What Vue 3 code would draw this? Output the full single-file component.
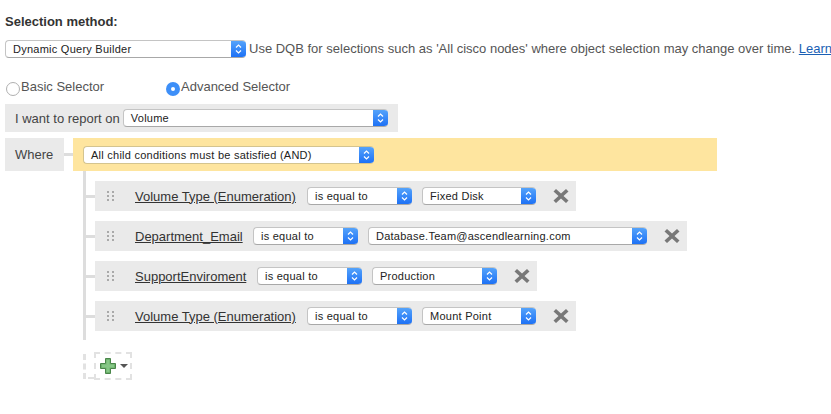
<script setup>
const rows = [
  { label: "Volume Type (Enumeration)", fieldWidth: 162, value: "Fixed Disk", valueWidth: 114 },
  { label: "Department_Email", fieldWidth: 108, value: "Database.Team@ascendlearning.com", valueWidth: 279 },
  { label: "SupportEnviroment", fieldWidth: 112, value: "Production", valueWidth: 125 },
  { label: "Volume Type (Enumeration)", fieldWidth: 162, value: "Mount Point", valueWidth: 114 },
];
</script>

<template>
  <div class="page">
    <div class="title">Selection method:</div>

    <div class="method">
      <div class="sel method-sel">
        <span class="sel-text">Dynamic Query Builder</span>
        <span class="stepper"><svg width="7" height="12" viewBox="0 0 7 12"><path d="M1 4.5 3.5 2 6 4.5M1 7.5 3.5 10 6 7.5" fill="none" stroke="#fff" stroke-width="1.2" /></svg></span>
      </div>
      <span class="help">Use DQB for selections such as 'All cisco nodes' where object selection may change over time. <a class="learn">Learn</a></span>
    </div>

    <div class="radios">
      <label class="radio basic"><span class="dot"></span>Basic Selector</label>
      <label class="radio"><span class="dot on"><span class="pip"></span></span>Advanced Selector</label>
    </div>

    <div class="report">
      <span>I want to report on</span>
      <div class="sel report-sel">
        <span class="sel-text">Volume</span>
        <span class="stepper"><svg width="7" height="12" viewBox="0 0 7 12"><path d="M1 4.5 3.5 2 6 4.5M1 7.5 3.5 10 6 7.5" fill="none" stroke="#fff" stroke-width="1.2" /></svg></span>
      </div>
    </div>

    <div class="where-row">
      <div class="where">Where</div>
      <div class="link"></div>
      <div class="group">
        <div class="sel group-sel">
          <span class="sel-text">All child conditions must be satisfied (AND)</span>
          <span class="stepper"><svg width="7" height="12" viewBox="0 0 7 12"><path d="M1 4.5 3.5 2 6 4.5M1 7.5 3.5 10 6 7.5" fill="none" stroke="#fff" stroke-width="1.2" /></svg></span>
        </div>
      </div>
    </div>

    <div class="tree">
      <div v-for="(row, i) in rows" :key="i" class="cond">
        <svg class="grip" width="7" height="11" viewBox="0 0 7 11" fill="#a9a9a9">
          <rect x="0" y="0" width="2" height="2" /><rect x="5" y="0" width="2" height="2" />
          <rect x="0" y="4" width="2" height="2" /><rect x="5" y="4" width="2" height="2" />
          <rect x="0" y="8" width="2" height="2" /><rect x="5" y="8" width="2" height="2" />
        </svg>
        <a class="field" :style="{ width: row.fieldWidth + 'px' }">{{ row.label }}</a>
        <div class="sel op-sel">
          <span class="sel-text">is equal to</span>
          <span class="stepper"><svg width="7" height="12" viewBox="0 0 7 12"><path d="M1 4.5 3.5 2 6 4.5M1 7.5 3.5 10 6 7.5" fill="none" stroke="#fff" stroke-width="1.2" /></svg></span>
        </div>
        <div class="sel" :style="{ width: row.valueWidth + 'px' }">
          <span class="sel-text">{{ row.value }}</span>
          <span class="stepper"><svg width="7" height="12" viewBox="0 0 7 12"><path d="M1 4.5 3.5 2 6 4.5M1 7.5 3.5 10 6 7.5" fill="none" stroke="#fff" stroke-width="1.2" /></svg></span>
        </div>
        <svg class="remove" width="16" height="16" viewBox="0 0 16 16"><path d="M3 1 8 5.500 13 1 15.500 3.500 10.500 8 15.500 12.500 13 15 8 10.500 3 15 .5 12.500 5.500 8 .5 3.500z" fill="#787878" /></svg>
      </div>
      <div class="add-row">
        <div class="add">
          <svg width="16" height="16" viewBox="0 0 16 16"><path d="M5.500.5h5v5h5v5h-5v5h-5v-5h-5v-5h5z" fill="#6cb06c" stroke="#4a864a" /><path d="M6.500 2h3v4.500H14v3H9.500V14h-3V9.500H2v-3h4.500z" fill="#86c786" /></svg>
          <svg width="8" height="4" viewBox="0 0 8 4"><path d="M0 0h8L4 4z" fill="#555" /></svg>
        </div>
      </div>
    </div>
  </div>
</template>

<style scoped>
.page {
  width: 831px;
  height: 414px;
  overflow: hidden;
  padding: 14px 0 0 5px;
  box-sizing: border-box;
  font-family: "Liberation Sans", Arial, sans-serif;
  font-size: 13px;
  color: #333;
  background: #fff;
}

.title {
  font-weight: bold;
  line-height: 15px;
}

.method {
  display: flex;
  align-items: center;
  margin-top: 11px;
  white-space: nowrap;
}

.help {
  margin-left: 3px;
  line-height: 16px;
  color: #555;
}

.learn {
  color: #1a5fb4;
  text-decoration: underline;
}

/* mac style select */
.sel {
  display: flex;
  flex-shrink: 0;
  height: 18px;
  box-sizing: border-box;
  align-items: center;
  background: #fff;
  border: 1px solid #c4c4c4;
  border-bottom-color: #a8a8a8;
  border-right: 0;
  border-radius: 4px;
  color: #222;
  font-size: 11px;
  letter-spacing: 0.25px;
  overflow: hidden;
}

.sel-text {
  flex: 1;
  padding-left: 7px;
  white-space: nowrap;
}

.stepper {
  display: flex;
  align-items: center;
  justify-content: center;
  width: 15px;
  height: 18px;
  margin-top: -1px;
  margin-bottom: -1px;
  background: linear-gradient(#58a6fb, #1a6ef5);
}

.method-sel {
  width: 241px;
}

.op-sel {
  width: 105px;
}

.radios {
  display: flex;
  margin-top: 22px;
  margin-left: 1px;
  line-height: 14px;
}

.radio {
  display: flex;
  align-items: flex-start;
  height: 16px;
  color: #555;
}

.basic {
  width: 160px;
}

.dot {
  display: flex;
  align-items: center;
  justify-content: center;
  width: 14px;
  height: 14px;
  margin-top: 2px;
  margin-right: 1px;
  box-sizing: border-box;
  border: 1px solid #b0b0b0;
  border-radius: 50%;
  background: #fff;
}

.dot.on {
  border: 0;
  background: #3d8ff8;
}

.pip {
  width: 4px;
  height: 4px;
  border-radius: 50%;
  background: #fff;
}

.report {
  display: flex;
  align-items: center;
  gap: 3px;
  width: 393px;
  height: 28px;
  margin-top: 8px;
  padding-left: 10px;
  box-sizing: border-box;
  background: #eaeaea;
  color: #444;
}

.report-sel {
  width: 265px;
}

.where-row {
  display: flex;
  align-items: stretch;
  height: 33px;
  margin-top: 6px;
}

.where {
  width: 59px;
  padding: 9px 0 0 10px;
  box-sizing: border-box;
  background: #eaeaea;
  color: #444;
}

.link {
  width: 9px;
  height: 3px;
  margin-top: 15px;
  background: #ddd;
}

.group {
  display: flex;
  align-items: center;
  width: 644px;
  padding-left: 10px;
  box-sizing: border-box;
  background: #fee59f;
}

.group-sel {
  width: 291px;
  border-color: #d4c48f;
}

.tree {
  position: relative;
  margin-left: 78px;
  padding: 10px 0 0 12px;
}

/* connector lines */
.tree::before {
  content: "";
  position: absolute;
  left: 0;
  top: 0;
  width: 3px;
  height: 169px;
  background: #ddd;
}

.cond {
  position: relative;
  display: inline-flex;
  align-items: center;
  gap: 10px;
  height: 30px;
  margin-bottom: 10px;
  padding-right: 7px;
  background: #eaeaea;
  vertical-align: top;
}

.cond::before {
  content: "";
  position: absolute;
  left: -9px;
  top: 14px;
  width: 9px;
  height: 3px;
  background: #ddd;
}

.grip {
  margin-left: 12px;
  margin-right: 11px;
}

.field {
  flex-shrink: 0;
  color: #333;
  white-space: nowrap;
  text-decoration: underline;
}

.remove {
  margin-left: 7px;
}

.add-row {
  position: relative;
  height: 40px;
}

.add-row::before {
  content: "";
  position: absolute;
  left: -12px;
  top: 2px;
  width: 0;
  height: 25px;
  border-left: 3px dashed #e2e2e2;
}

.add-row::after {
  content: "";
  position: absolute;
  left: -7px;
  top: 25px;
  width: 6px;
  border-top: 2px solid #e2e2e2;
}

.add {
  display: flex;
  align-items: center;
  gap: 4px;
  width: 38px;
  height: 28px;
  margin: 11px 0 0 -1px;
  padding-left: 4px;
  box-sizing: border-box;
  border: 2px dashed #e2e2e2;
}
</style>
